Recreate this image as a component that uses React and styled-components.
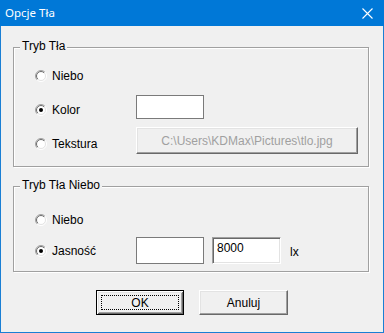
import React, { useId } from 'react';
import styled, { createGlobalStyle, css } from 'styled-components';

const GlobalStyle = createGlobalStyle`
  html, body {
    margin: 0;
    padding: 0;
    background: #f0f0f0;
  }
  * {
    box-sizing: border-box;
  }
`;

function Radio({ checked }) {
  const id = useId();
  return (
    <svg width="12" height="12" viewBox="0 0 12 12">
      <defs>
        <linearGradient id={id + 'o'} x1="0" y1="0" x2="1" y2="1">
          <stop offset="0.5" stopColor="#a0a0a0" />
          <stop offset="0.5" stopColor="#ffffff" />
        </linearGradient>
        <linearGradient id={id + 'i'} x1="0" y1="0" x2="1" y2="1">
          <stop offset="0.5" stopColor="#696969" />
          <stop offset="0.5" stopColor="#e3e3e3" />
        </linearGradient>
      </defs>
      <circle cx="6" cy="6" r="5.5" fill="none" stroke={`url(#${id}o)`} strokeWidth="1" />
      <circle cx="6" cy="6" r="4.5" fill="#fff" stroke={`url(#${id}i)`} strokeWidth="1" />
      {checked && <circle cx="6" cy="6" r="2" fill="#000" />}
    </svg>
  );
}

function CloseIcon() {
  return (
    <svg width="11" height="11" viewBox="0 0 11 11">
      <path d="M0.5 0.5 L10.5 10.5 M10.5 0.5 L0.5 10.5" stroke="#fff" strokeWidth="1.1" fill="none" />
    </svg>
  );
}

const App = () => {
  return (
    <>
      <GlobalStyle />
      <Window>
        <TitleBar>
          <Title>Opcje Tła</Title>
          <CloseButton>
            <CloseIcon />
          </CloseButton>
        </TitleBar>
        <Body>
          <Group $top={21} $padTop={11} $padBottom={5}>
            <Legend>Tryb Tła</Legend>
            <Row $h={34}>
              <RadioLabel>
                <Radio />
                Niebo
              </RadioLabel>
            </Row>
            <Row $h={34}>
              <RadioLabel>
                <Radio checked />
                Kolor
              </RadioLabel>
              <FlatBox $offset={2} />
            </Row>
            <Row $h={34}>
              <RadioLabel>
                <Radio />
                Tekstura
              </RadioLabel>
              <PathButton disabled>C:\Users\KDMax\Pictures\tlo.jpg</PathButton>
            </Row>
          </Group>

          <Group $top={19} $padTop={17} $padBottom={5}>
            <Legend>Tryb Tła Niebo</Legend>
            <Row $h={31}>
              <RadioLabel>
                <Radio />
                Niebo
              </RadioLabel>
            </Row>
            <Row $h={31}>
              <RadioLabel>
                <Radio checked />
                Jasność
              </RadioLabel>
              <Controls>
                <FlatBox $tall />
                <SunkenBox>8000</SunkenBox>
                <Unit>lx</Unit>
              </Controls>
            </Row>
          </Group>

          <ButtonRow>
            <DialogButton $w={88} $default>OK</DialogButton>
            <DialogButton $w={89}>Anuluj</DialogButton>
          </ButtonRow>
        </Body>
      </Window>
    </>
  );
};

export default App;

const Window = styled.div`
  width: 384px;
  height: 333px;
  display: flex;
  flex-direction: column;
  background: #f0f0f0;
  border: 1px solid #1a7fd4;
  border-top: none;
  font-family: 'Liberation Sans', Arial, sans-serif;
  font-size: 12px;
  color: #000;
`;

const TitleBar = styled.div`
  height: 26px;
  margin: 0 -1px;
  padding: 0 6px 0 5px;
  display: flex;
  align-items: center;
  justify-content: space-between;
  background: #0078d7;
`;

const Title = styled.span`
  font-family: 'Noto Sans', 'Open Sans', sans-serif;
  font-size: 11.5px;
  color: #fff;
  line-height: 14px;
`;

const CloseButton = styled.div`
  width: 22px;
  height: 20px;
  display: flex;
  align-items: center;
  justify-content: center;
`;

const Body = styled.div`
  flex: 1;
  padding: 0 14px 0 12px;
  display: flex;
  flex-direction: column;
`;

const Group = styled.div`
  position: relative;
  margin-top: ${(p) => p.$top}px;
  padding: ${(p) => p.$padTop}px 0 ${(p) => p.$padBottom}px 21px;
  border: 1px solid #a0a0a0;
  box-shadow: inset 1px 1px 0 #fff, 1px 1px 0 #fff;
`;

const Legend = styled.span`
  position: absolute;
  top: -9px;
  left: 6px;
  padding: 0 2px;
  line-height: 14px;
  background: #f0f0f0;
`;

const Row = styled.div`
  height: ${(p) => p.$h}px;
  display: flex;
  align-items: center;
`;

const RadioLabel = styled.label`
  width: 101px;
  display: flex;
  align-items: center;
  gap: 5px;
  line-height: 14px;
`;

const FlatBox = styled.div`
  width: 68px;
  height: ${(p) => (p.$tall ? 27 : 24)}px;
  align-self: ${(p) => (p.$offset !== undefined ? 'flex-start' : 'auto')};
  margin-top: ${(p) => p.$offset || 0}px;
  background: #fff;
  border: 1px solid #7a7a7a;
`;

const PathButton = styled.button`
  width: 222px;
  height: 27px;
  align-self: flex-start;
  padding: 0;
  background: #f0f0f0;
  border: 1px solid;
  border-color: #fff #696969 #696969 #fff;
  box-shadow: inset -1px -1px 0 #a0a0a0, inset 1px 1px 0 #e3e3e3;
  font-family: 'Liberation Sans', Arial, sans-serif;
  font-size: 12px;
  color: #a0a0a0;
`;

const Controls = styled.div`
  display: flex;
  align-items: center;
  gap: 8px;
`;

const SunkenBox = styled.div`
  width: 69px;
  height: 27px;
  padding: 3px 4px;
  background: #fff;
  border: 1px solid;
  border-color: #a0a0a0 #fff #fff #a0a0a0;
  box-shadow: inset 1px 1px 0 #696969, inset -1px -1px 0 #e3e3e3;
  line-height: 14px;
`;

const Unit = styled.span`
  margin-left: 1px;
  padding-top: 3px;
`;

const ButtonRow = styled.div`
  margin-top: 18px;
  display: flex;
  justify-content: center;
  gap: 15px;
  padding-left: 2px;
`;

const DialogButton = styled.button`
  position: relative;
  width: ${(p) => p.$w}px;
  height: 25px;
  padding: 0;
  background: #f0f0f0;
  border: 1px solid;
  border-color: #fff #696969 #696969 #fff;
  box-shadow: inset -1px -1px 0 #a0a0a0, inset 1px 1px 0 #e3e3e3;
  font-family: 'Liberation Sans', Arial, sans-serif;
  font-size: 12px;
  color: #000;

  ${(p) =>
    p.$default &&
    css`
      border-color: #000;
      box-shadow: inset 1px 1px 0 #fff, inset -1px -1px 0 #696969, inset 2px 2px 0 #e3e3e3,
        inset -2px -2px 0 #a0a0a0;

      &::after {
        content: '';
        position: absolute;
        inset: 4px;
        border: 1px dotted #000;
      }
    `}
`;
